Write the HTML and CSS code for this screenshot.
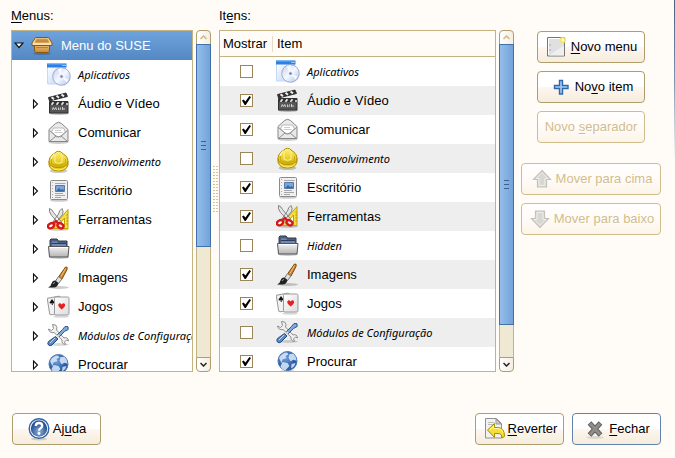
FILE: index.html
```html
<!DOCTYPE html>
<html lang="pt-BR">
<head>
<meta charset="utf-8">
<title>Menu principal</title>
<link rel="stylesheet" href="styles.css">
</head>
<body>
<svg class="defs" aria-hidden="true">
  <defs>
    <linearGradient id="g-gold" x2="0" y2="1"><stop stop-color="#fff27a"/><stop offset=".5" stop-color="#ecd43a"/><stop offset="1" stop-color="#d0b000"/></linearGradient>
    <linearGradient id="g-box" x2="0" y2="1"><stop stop-color="#f3c988"/><stop offset="1" stop-color="#c98a35"/></linearGradient>
    <linearGradient id="g-sky" x2="1" y2="1"><stop stop-color="#ffffff"/><stop offset="1" stop-color="#b9d2fa"/></linearGradient>
    <linearGradient id="g-disc" x2="1" y2="1"><stop stop-color="#c9cdea"/><stop offset=".5" stop-color="#f4f8ff"/><stop offset="1" stop-color="#a9c0ea"/></linearGradient>
    <linearGradient id="g-grey" x2="0" y2="1"><stop stop-color="#f4f4f4"/><stop offset="1" stop-color="#b4b4b4"/></linearGradient>
    <linearGradient id="g-page" x2="1" y2="1"><stop stop-color="#ffffff"/><stop offset="1" stop-color="#dcdcdc"/></linearGradient>
    <radialGradient id="g-globe" cx=".4" cy=".35"><stop stop-color="#6f9fd8"/><stop offset="1" stop-color="#2a5ba4"/></radialGradient>
    <radialGradient id="g-help" cx=".5" cy=".7"><stop stop-color="#8db1dc"/><stop offset="1" stop-color="#2c5596"/></radialGradient>
  </defs>

  <symbol id="box" viewBox="0 0 24 24">
    <ellipse cx="12" cy="19.500" rx="9" ry="1.500" fill="#264a78" opacity=".4"/>
    <path d="M4.500 9h15v8l-1.500 1.500h-12l-1.500-1.500z" fill="url(#g-box)" stroke="#8a5710"/>
    <path d="M5.500 3.500h13l3.500 5.500v2.500H2V9z" fill="#f8d8a4" stroke="#8a5710"/>
    <path d="M6.500 5h11l1.500 3.500h-14z" fill="#c08d42" stroke="#d9a050"/>
    <path d="M3 10h18" stroke="#ffe7bd"/>
    <path d="M6 13.500h12" stroke="#b98237"/>
  </symbol>
  <symbol id="apps" viewBox="0 0 24 24">
    <path d="M.500 3h18v18H.500z" fill="url(#g-sky)" stroke="#c4d8fa"/>
    <path d="M0 .500h19.500v4H0z" fill="#2d7fe6"/><path d="M.500 1h18.500" stroke="#69b0ff"/>
    <path d="M15.500 2.500h1M17.500 2.500h1" stroke="#fff"/>
    <circle cx="14.500" cy="13.500" r="8.800" fill="url(#g-disc)" stroke="#8e9ac8" stroke-width=".8"/>
    <path d="m14.500 13.500-4-7.500 4-1zM14.500 13.500l5 6 2-3z" fill="#fff" opacity=".8"/>
    <circle cx="14.500" cy="13.500" r="2.500" fill="#c5cae4" stroke="#fff"/><circle cx="14.500" cy="13.500" r="1" fill="#5a76c4"/>
  </symbol>
  <symbol id="video" viewBox="0 0 24 24">
    <ellipse cx="12" cy="21.500" rx="10" ry="1.500" opacity=".25"/>
    <path d="M2.500 9.500h18.500v11.500H2.500z" fill="#555" stroke="#303030"/>
    <path d="m1.500 5.500 17.500-4.500 1.500 3.500-18 4.500z" fill="#333" stroke="#222" stroke-width=".8"/>
    <path d="m4.500 5.300 2.500 1.800M9.500 3.800l2.500 1.900M14.500 2.500l2.500 1.900" stroke="#eee" stroke-width="2"/>
    <path d="M3 10h18v3H3z" fill="#333"/>
    <path d="m4.500 12.800 2-2.600M9.500 12.800l2-2.600M14.500 12.800l2-2.600M19.500 12.800l1-1.500" stroke="#e8e8e8" stroke-width="1.800"/>
    <path d="m5.500 18 .7-2.500 1.300 2 1.300-2 .7 2.500m2-2.500v2.500m2-2.500-.5 2.500m2.500-3v3m1.500-2v2" stroke="#ddd" fill="none" stroke-width=".9"/>
  </symbol>
  <symbol id="mail" viewBox="0 0 24 24">
    <ellipse cx="11.500" cy="21.500" rx="10" ry="1.500" opacity=".2"/>
    <path d="M2 8.500 8.500 2.500q3-2.500 6 0l6.500 6v12H2z" fill="#e9e9e9" stroke="#858585"/>
    <path d="m4.500 11 2-4h10l2 4-5 5h-4z" fill="#fff" stroke="#aaa" stroke-width=".8"/>
    <path d="M8 9.500h6M7.500 11.500h8" stroke="#ccc"/>
    <path d="m2.500 9.500 6.500 5.500q2.500 1.500 5 0l6.500-5.500M3 20l6-5M20 20l-6-5" fill="none" stroke="#8f8f8f"/>
  </symbol>
  <symbol id="helmet" viewBox="0 0 24 24">
    <ellipse cx="11.500" cy="21" rx="9" ry="2" opacity=".2"/>
    <path d="M2 11v4q1.500 6 9.500 6t9.500-6v-4z" fill="#e4cb2c" stroke="#b39100"/>
    <path d="M2.500 14q-2-7 5.500-11 1-1.700 3.500-1.700T15 3q7.500 4 5.500 11-2 3.500-9 3.500T2.500 14z" fill="url(#g-gold)" stroke="#b39100"/>
    <path d="M8 4.500v8q3.500 1.500 7 0v-8" fill="none" stroke="#fff58e"/>
    <path d="M4.500 9v5q6.500 3 14 0V9" fill="none" stroke="#c4a50c" stroke-width=".8"/>
    <path d="M4 16.500q2 3.500 7.500 3.500t7.500-3.500" fill="none" stroke="#fff06c"/>
    <path d="M4 9q1-4 3.500-5" stroke="#fff" fill="none"/>
  </symbol>
  <symbol id="office" viewBox="0 0 24 24">
    <ellipse cx="12" cy="21.500" rx="9" ry="1.300" opacity=".2"/>
    <rect x="3.500" y="1.500" width="17" height="19" rx="1" fill="#f0f0f0" stroke="#8b8b8b"/>
    <path d="M5.500 3v16" stroke="#aaa" stroke-dasharray="1 2"/>
    <path d="M8 4.500h10.500M8 14.500h8M8 16.500h10M8 18.500h6" stroke="#a7a7a7"/>
    <path d="M8.500 6.500h9v6h-9z" fill="#79a7dd" stroke="#5878a5"/><path d="m9 12 3-3 2 2 2-1 1 2z" fill="#3c659b"/>
  </symbol>
  <symbol id="tools" viewBox="0 0 24 24">
    <ellipse cx="12" cy="21.500" rx="10" ry="1.300" opacity=".2"/>
    <path d="M21 1.500v19H4.500z" fill="#f7df3e" stroke="#c2a000"/><path d="M17.500 10v7h-6z" fill="#fff" stroke="#c2a000"/>
    <path d="M19.500 7h1M19.500 10h1M19.500 13h1M19.500 16h1" stroke="#8d7300"/>
    <path d="M2.500.500q3 1 4 4l8 9.500-2 2L4.500 7.500Q1.500 3.500 2.500.500zM15 .500q-3 2-3.500 5.500l-6 8.500 2 2 8-10q1.500-3-.5-6z" fill="#e5e5e5" stroke="#777" stroke-width=".9"/>
    <ellipse cx="4" cy="17.800" rx="3.200" ry="2.300" fill="#fff" stroke="#d51919" stroke-width="2.400" transform="rotate(-30 4 17.800)"/>
    <ellipse cx="13.500" cy="17.800" rx="3.200" ry="2.300" fill="#f5dede" stroke="#d51919" stroke-width="2.400" transform="rotate(30 13.500 17.800)"/>
    <path d="m6.500 15 2.500-2 2.500 2.500" fill="none" stroke="#d51919" stroke-width="2.200"/>
  </symbol>
  <symbol id="folder" viewBox="0 0 24 24">
    <ellipse cx="12" cy="20.500" rx="10" ry="1.500" opacity=".2"/>
    <path d="M3 18V3l1-1h6l1.500 2h8.500V18z" fill="#4c5f80" stroke="#333b48"/>
    <path d="M5 4.500h5l1 1.500h8v3H5z" fill="#6f8ab8"/><path d="M5 6.500h14" stroke="#303c55"/>
    <path d="M1.500 9.500h20.500l-1 10.500H2.500z" fill="url(#g-grey)" stroke="#555"/><path d="M2.500 10.500h18.500" stroke="#fff"/>
  </symbol>
  <symbol id="brush" viewBox="0 0 24 24">
    <ellipse cx="12" cy="21.500" rx="10" ry="1.500" opacity=".2"/>
    <path d="M18.500 1q2.500-.5 1.500 2.500l-5 9.500-3.500-2z" fill="#cf842d" stroke="#824908"/>
    <path d="m18.500 2.500-4.500 8" stroke="#f8c17c"/>
    <path d="m11.500 10.500 3.500 2.500-3.500 4.500-3-2.500z" fill="#dedede" stroke="#777"/>
    <path d="M8 14.500 11.500 17q-1 4.500-5 4.500H1q3-1 3.500-4 1-3 3.500-3z" fill="#222"/>
    <path d="M6 18q.5-1.500 2-1.500" stroke="#999" fill="none"/>
  </symbol>
  <symbol id="cards" viewBox="0 0 24 24">
    <ellipse cx="14" cy="21.500" rx="8" ry="1.300" opacity=".15"/>
    <rect x="1.500" y="2" width="13" height="17" rx="1.500" fill="#f2f2f2" stroke="#999" transform="rotate(-9 8 11)"/>
    <path d="m5 4 2.500 3.500q-1 1.500-2 .5l.3 2h-1l-.3-2q-1.500 1-2-.5z" fill="#111"/>
    <rect x="7.500" y="2" width="14.500" height="18" rx="1.500" fill="url(#g-page)" stroke="#9b9b9b"/>
    <path d="M14.700 14.500q-4-3-3.400-5 1.400-2.500 3.400 0 2-2.500 3.400 0 .6 2-3.400 5z" fill="#e52020"/>
  </symbol>
  <symbol id="config" viewBox="0 0 24 24">
    <ellipse cx="12" cy="20.500" rx="10" ry="1.500" opacity=".15"/>
    <path d="M5.500.500q4-.5 4.500 3l-.5 2.500 7.500 8q4-1.500 4.500 3l-2-1-2 2 1 2.500q-4-.5-3.500-4.500L7 8.500Q2.500 9.500 1.500 5l3 1.500 2-2z" fill="#efefef" stroke="#858585" stroke-width=".9"/>
    <path d="m18 2.500 3 .2.200 2.800-3.700 2-5 5-2-2 5-5z" fill="#80a9dd" stroke="#204a87" stroke-width=".9"/>
    <path d="m12 11-4 4" stroke="#ddd" stroke-width="1.500"/>
    <path d="m8.500 12.500 2.500 2.500-6 6q-2 1.500-3.500 0t0-3.500z" fill="#5d8ac4" stroke="#204a87"/>
    <path d="m3 19 5-5" stroke="#c5dbf3"/>
  </symbol>
  <symbol id="globe" viewBox="0 0 24 24">
    <ellipse cx="11.500" cy="21.500" rx="8" ry="1.300" opacity=".2"/>
    <circle cx="11.500" cy="11" r="9.500" fill="url(#g-globe)" stroke="#4a76b4"/>
    <path d="M3 8q3-5.500 8-5.500l1.500 2-3 1.500 1 2-4 1.500-1 3.500zM13.500 4l4-.3q3 3 3 7l-3-1-3 1.500-2-3.500zM6.500 12l5 1 2 3-4 4.200q-4-1-5-4zM15.500 14l4-1q-1 4-4.500 5.500z" fill="#dcebfa" opacity=".85"/>
  </symbol>
  <symbol id="newmenu" viewBox="0 0 24 24">
    <path d="M2.500 2.500h17v18.500h-17z" fill="#e0e0e3" stroke="#77776f"/>
    <path d="M3.500 20v-16.500h15" fill="none" stroke="#fff"/><path d="m4 20.500 15-10v10z" fill="#f0efef"/>
    <path d="M5 9v2M5 14v2" stroke="#aaa"/>
    <circle cx="18" cy="5" r="3.200" fill="#f5e462" opacity=".85"/><circle cx="18" cy="5" r="1.600" fill="#fff9bd"/>
  </symbol>
  <symbol id="plus" viewBox="0 0 24 24">
    <path d="M10.500 5.500h3v5h5.500v3h-5.500v5.500h-3v-5.500H5.500v-3h5z" fill="#a9caec" stroke="#2d68ad" stroke-width="1.400"/>
  </symbol>
  <symbol id="up" viewBox="0 0 24 24">
    <path d="m12 3.500 8.500 9h-4v7.500h-9v-7.500h-4z" fill="#d9d7d2" stroke="#c4c2bd" stroke-width="1.200"/>
    <path d="m12 5.500 6 6h-3v7h-6v-7H6z" fill="none" stroke="#efeeec"/>
  </symbol>
  <symbol id="down" viewBox="0 0 24 24">
    <path d="m12 20.500-8.500-9h4V4h9v7.500h4z" fill="#d9d7d2" stroke="#c4c2bd" stroke-width="1.200"/>
    <path d="m12 18.500-6-6h3v-7h6v7h3z" fill="none" stroke="#efeeec"/>
  </symbol>
  <symbol id="help" viewBox="0 0 24 24">
    <ellipse cx="12" cy="22" rx="8" ry="1.500" opacity=".15"/>
    <circle cx="12" cy="11.500" r="9.800" fill="#fff" stroke="#3263a6" stroke-width="1.400"/>
    <circle cx="12" cy="11.500" r="8.200" fill="url(#g-help)"/>
    <path d="M8.800 9q0-3 3.200-3t3.200 2.700q0 1.500-1.700 2.500-1.500.8-1.500 2.500" fill="none" stroke="#fff" stroke-width="2.300"/><circle cx="12" cy="16.500" r="1.400" fill="#fff"/>
  </symbol>
  <symbol id="revert" viewBox="0 0 24 24">
    <path d="M3.500 1.500h11l5 5v14.500h-16z" fill="#f1f1f1" stroke="#909090"/><path d="M14 2v5h5z" fill="#ccc" stroke="#999"/>
    <path d="M6 5.500h6M6 7.500h5" stroke="#bbb"/>
    <path d="m5.500 13 7-6.500v4h3q7 0 7 9l-2.500 1.500q0-4.500-4-4.500h-3.500v4z" fill="#f4df3a" stroke="#a88c00"/>
    <path d="m7.500 13 4-3.500v2h4q4.500 0 5.500 4" fill="none" stroke="#fff9ad"/>
  </symbol>
  <symbol id="close" viewBox="0 0 24 24">
    <ellipse cx="12" cy="20.500" rx="9" ry="1.500" opacity=".1"/>
    <path d="m6.500 6 11 12M17.500 6l-11 12" stroke="#5c5c5c" stroke-width="5"/>
    <path d="m7 6.500 10 11M17 6.500l-10 11" stroke="#8d8d8b" stroke-width="3.300"/>
  </symbol>
  <symbol id="arrow" viewBox="0 0 8 12"><path d="M1.500 2 5.500 6l-4 4z" fill="#fff" stroke="#111" stroke-width="1.100"/></symbol>
</svg>

<main class="editor">
  <section class="pane menus">
    <h2 id="menus-label"><u>M</u>enus:</h2>
    <div class="scroller">
      <ul class="view tree" aria-labelledby="menus-label">
        <li class="row root"><button class="expander" aria-label="Recolher"><svg viewBox="0 0 10 7"><path d="M1 1h8L5 5.500z" fill="#fff" stroke="#111" stroke-width="1.200"/></svg></button><svg class="icon"><use href="#box"/></svg><span>Menu do SUSE</span></li>
        <li class="row off"><span class="expander"></span><svg class="icon"><use href="#apps"/></svg><span>Aplicativos</span></li>
        <li class="row"><button class="expander" aria-label="Expandir"><svg><use href="#arrow"/></svg></button><svg class="icon"><use href="#video"/></svg><span>Áudio e Vídeo</span></li>
        <li class="row"><button class="expander" aria-label="Expandir"><svg><use href="#arrow"/></svg></button><svg class="icon"><use href="#mail"/></svg><span>Comunicar</span></li>
        <li class="row off"><button class="expander" aria-label="Expandir"><svg><use href="#arrow"/></svg></button><svg class="icon"><use href="#helmet"/></svg><span>Desenvolvimento</span></li>
        <li class="row"><button class="expander" aria-label="Expandir"><svg><use href="#arrow"/></svg></button><svg class="icon"><use href="#office"/></svg><span>Escritório</span></li>
        <li class="row"><button class="expander" aria-label="Expandir"><svg><use href="#arrow"/></svg></button><svg class="icon"><use href="#tools"/></svg><span>Ferramentas</span></li>
        <li class="row off"><button class="expander" aria-label="Expandir"><svg><use href="#arrow"/></svg></button><svg class="icon"><use href="#folder"/></svg><span>Hidden</span></li>
        <li class="row"><button class="expander" aria-label="Expandir"><svg><use href="#arrow"/></svg></button><svg class="icon"><use href="#brush"/></svg><span>Imagens</span></li>
        <li class="row"><button class="expander" aria-label="Expandir"><svg><use href="#arrow"/></svg></button><svg class="icon"><use href="#cards"/></svg><span>Jogos</span></li>
        <li class="row off"><button class="expander" aria-label="Expandir"><svg><use href="#arrow"/></svg></button><svg class="icon"><use href="#config"/></svg><span>Módulos de Configuração</span></li>
        <li class="row"><button class="expander" aria-label="Expandir"><svg><use href="#arrow"/></svg></button><svg class="icon"><use href="#globe"/></svg><span>Procurar</span></li>
      </ul>
      <div class="scrollbar">
        <button class="step" disabled aria-label="Rolar para cima"><svg viewBox="0 0 7 5"><path d="M.500 4 3.500 1l3 3"/></svg></button>
        <div class="track short"><div class="thumb"></div></div>
        <button class="step end" aria-label="Rolar para baixo"><svg viewBox="0 0 7 5"><path d="m.500 1 3 3 3-3"/></svg></button>
      </div>
    </div>
  </section>

  <div class="splitter"><i class="grip"></i></div>

  <section class="pane items">
    <h2 id="items-label">It<u>e</u>ns:</h2>
    <div class="scroller">
      <div class="view">
        <table aria-labelledby="items-label">
          <thead><tr><th class="show"><span>Mostrar</span></th><th>Item</th></tr></thead>
          <tbody>
            <tr class="off"><td class="show"><input type="checkbox" id="i1"></td><td><label class="cell" for="i1"><svg class="icon"><use href="#apps"/></svg><span>Aplicativos</span></label></td></tr>
            <tr><td class="show"><input type="checkbox" id="i2" checked></td><td><label class="cell" for="i2"><svg class="icon"><use href="#video"/></svg><span>Áudio e Vídeo</span></label></td></tr>
            <tr><td class="show"><input type="checkbox" id="i3" checked></td><td><label class="cell" for="i3"><svg class="icon"><use href="#mail"/></svg><span>Comunicar</span></label></td></tr>
            <tr class="off"><td class="show"><input type="checkbox" id="i4"></td><td><label class="cell" for="i4"><svg class="icon"><use href="#helmet"/></svg><span>Desenvolvimento</span></label></td></tr>
            <tr><td class="show"><input type="checkbox" id="i5" checked></td><td><label class="cell" for="i5"><svg class="icon"><use href="#office"/></svg><span>Escritório</span></label></td></tr>
            <tr><td class="show"><input type="checkbox" id="i6" checked></td><td><label class="cell" for="i6"><svg class="icon"><use href="#tools"/></svg><span>Ferramentas</span></label></td></tr>
            <tr class="off"><td class="show"><input type="checkbox" id="i7"></td><td><label class="cell" for="i7"><svg class="icon"><use href="#folder"/></svg><span>Hidden</span></label></td></tr>
            <tr><td class="show"><input type="checkbox" id="i8" checked></td><td><label class="cell" for="i8"><svg class="icon"><use href="#brush"/></svg><span>Imagens</span></label></td></tr>
            <tr><td class="show"><input type="checkbox" id="i9" checked></td><td><label class="cell" for="i9"><svg class="icon"><use href="#cards"/></svg><span>Jogos</span></label></td></tr>
            <tr class="off"><td class="show"><input type="checkbox" id="i10"></td><td><label class="cell" for="i10"><svg class="icon"><use href="#config"/></svg><span>Módulos de Configuração</span></label></td></tr>
            <tr><td class="show"><input type="checkbox" id="i11" checked></td><td><label class="cell" for="i11"><svg class="icon"><use href="#globe"/></svg><span>Procurar</span></label></td></tr>
          </tbody>
        </table>
      </div>
      <div class="scrollbar">
        <button class="step" disabled aria-label="Rolar para cima"><svg viewBox="0 0 7 5"><path d="M.500 4 3.500 1l3 3"/></svg></button>
        <div class="track long"><div class="thumb"></div></div>
        <button class="step end" aria-label="Rolar para baixo"><svg viewBox="0 0 7 5"><path d="m.500 1 3 3 3-3"/></svg></button>
      </div>
    </div>
  </section>

  <aside class="actions">
    <div class="create">
      <button class="btn"><svg class="icon"><use href="#newmenu"/></svg><span><u>N</u>ovo menu</span></button>
      <button class="btn"><svg class="icon"><use href="#plus"/></svg><span>No<u>v</u>o item</span></button>
      <button class="btn" disabled><span>Novo <u>s</u>eparador</span></button>
    </div>
    <div class="move">
      <button class="btn" disabled><svg class="icon"><use href="#up"/></svg><span>Mover para cima</span></button>
      <button class="btn" disabled><svg class="icon"><use href="#down"/></svg><span>Mover para baixo</span></button>
    </div>
  </aside>
</main>

<footer class="bar">
  <button class="btn"><svg class="icon"><use href="#help"/></svg><span>Aj<u>u</u>da</span></button>
  <span class="spacer"></span>
  <button class="btn"><svg class="icon"><use href="#revert"/></svg><span><u>R</u>everter</span></button>
  <button class="btn default"><svg class="icon"><use href="#close"/></svg><span><u>F</u>echar</span></button>
</footer>
<i class="edge"></i>
</body>
</html>
```
FILE: styles.css
```css
:root {
  --bg: #fffcf7;
  --line: #c4b283;
  --line-dark: #b09c6c;
}
* { box-sizing: border-box; }
body {
  margin: 0;
  height: 100vh;
  display: flex;
  flex-direction: column;
  background: var(--bg);
  color: #000;
  font: 13px/16px "Liberation Sans", Arial, sans-serif;
}
button { font: inherit; color: inherit; margin: 0; }
u { text-decoration: underline; text-decoration-thickness: 1px; text-underline-offset: 2px; }
.defs { position: absolute; width: 0; height: 0; }
.icon { width: 24px; height: 24px; flex: none; }

.editor {
  flex: 1;
  min-height: 0;
  display: flex;
  padding: 8px 14px 0 11px;
}
.pane { display: flex; flex-direction: column; min-width: 0; min-height: 0; }
.menus { flex: 0 0 200px; }
.items { flex: 1; }
.pane h2 { margin: 0; font-size: 13px; line-height: 16px; font-weight: 400; padding-bottom: 6px; }
.scroller { flex: 1; min-height: 0; display: flex; gap: 3px; }
.view {
  flex: 1;
  min-width: 0;
  overflow: hidden;
  background: #fff;
  border: 1px solid var(--line);
}

.tree { list-style: none; margin: 0; padding: 0; }
.row { display: flex; align-items: center; height: 29px; padding-left: 18px; white-space: nowrap; }
.row .icon { margin-right: 7px; }
.row.root {
  padding-left: 1px;
  color: #fff;
  background: linear-gradient(#6fa3dc, #5488c4);
}
.off span { font-family: "Noto Sans", sans-serif; font-size: 11px; font-style: italic; }
.expander {
  width: 17px;
  height: 16px;
  padding: 0 0 0 2px;
  border: 0;
  background: none;
  flex: none;
}
.expander svg { display: block; width: 8px; height: 12px; }
.root .expander { padding-left: 1px; }
.root .expander svg { width: 10px; height: 7px; }

.scrollbar { flex: 0 0 15px; display: flex; flex-direction: column; }
.step {
  height: 15px;
  padding: 0;
  display: grid;
  place-items: center;
  border: 1px solid var(--line-dark);
  border-radius: 4px 4px 0 0;
  background: linear-gradient(90deg, #fff, #f5eee0);
}
.step.end { border-radius: 0 0 4px 4px; }
.step svg { width: 7px; height: 5px; fill: none; stroke: #222; stroke-width: 1.5; }
.step:disabled svg { stroke: #cdb988; }
.track {
  flex: 1;
  background: #efe8d2;
  border: solid var(--line);
  border-width: 0 1px;
}
.thumb {
  margin: -1px -1px 0;
  border: 1px solid #4270ad;
  background:
    repeating-linear-gradient(#3a618f 0 1px, transparent 1px 4px) center / 5px 9px no-repeat,
    linear-gradient(90deg, #94bdeb, #74a3d9);
}
.short .thumb { height: 65%; }
.long .thumb { height: 90%; }

.splitter { flex: 0 0 8px; display: flex; align-items: center; padding-left: 1px; }
.grip {
  width: 6px;
  height: 48px;
  background: conic-gradient(from 90deg at 1px 1px, transparent 270deg, #d3c49c 0) 0 0 / 3px 3px;
}

table { width: 100%; border-collapse: separate; border-spacing: 0; table-layout: fixed; }
th {
  height: 26px;
  padding: 0 0 0 4px;
  text-align: left;
  font-weight: 400;
  background: var(--bg);
  border-bottom: 1px solid var(--line);
}
th.show { width: 53px; padding: 0 0 0 3px; }
th.show span { display: block; border-right: 1px solid #e3dcc8; }
td { height: 29px; padding: 0; }
td.show { text-align: center; }
tbody tr:nth-child(even) { background: #eee; }
.cell { display: flex; align-items: center; gap: 7px; padding-left: 3px; white-space: nowrap; }
input[type="checkbox"] {
  appearance: none;
  display: block;
  width: 13px;
  height: 13px;
  margin: 0 auto;
  border: 1px solid #9c8657;
  background: #fff;
}
input[type="checkbox"]:checked::before {
  content: "";
  display: block;
  width: 9px;
  height: 9px;
  margin: 1px;
  background: #000;
  clip-path: polygon(0 50%, 18% 38%, 38% 62%, 82% 0, 100% 12%, 42% 100%, 30% 100%);
}

.actions { flex: 0 0 140px; margin-left: 7px; padding-top: 23px; }
.create, .move { display: flex; flex-direction: column; gap: 8px; }
.create { padding: 0 16px 20px; }
.btn {
  display: flex;
  align-items: center;
  justify-content: center;
  gap: 2px;
  height: 32px;
  padding: 0 4px;
  white-space: nowrap;
  border: 1px solid var(--line-dark);
  border-radius: 4px;
  background: linear-gradient(#fff 0 50%, #fff6ef 50%, #f4eddd);
}
.btn:disabled {
  color: #d1bd8c;
  border-color: #d1bd8c;
  background: linear-gradient(#fff, #fffaf6 55%, #fbf4e8);
  text-shadow: 1px 1px #fff;
}
.bar { display: flex; gap: 8px; padding: 41px 14px 13px 12px; }
.bar .btn { min-width: 89px; }
.spacer { flex: 1; }
.btn.default { border-color: #6383ae; }
.edge {
  position: absolute;
  top: 0;
  right: 0;
  width: 1px;
  height: 160px;
  background: linear-gradient(#4c6078, #7f93ad 50%, #d9dde2 85%, transparent);
}
```
